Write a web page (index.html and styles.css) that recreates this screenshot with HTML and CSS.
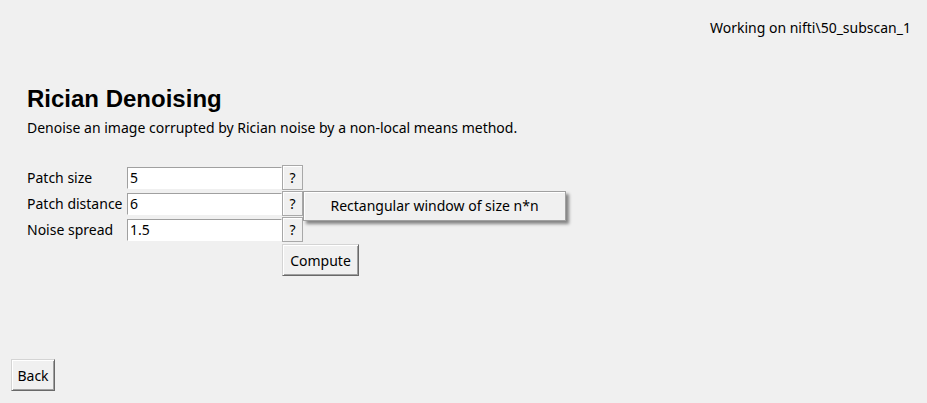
FILE: index.html
```html
<!DOCTYPE html>
<html>
<head>
<meta charset="utf-8">
<link rel="stylesheet" href="styles.css">
</head>
<body>
<div class="window">
  <div class="status">Working on nifti\50_subscan_1</div>
  <div class="content">
    <h1 class="title">Rician Denoising</h1>
    <p class="desc">Denoise an image corrupted by Rician noise by a non-local means method.</p>
    <div class="form">
      <label class="lbl">Patch size</label>
      <div class="entry">5</div>
      <button class="help">?</button>

      <label class="lbl">Patch distance</label>
      <div class="entry">6</div>
      <div class="help-wrap">
        <button class="help">?</button>
        <div class="tooltip">Rectangular window of size n*n</div>
      </div>

      <label class="lbl">Noise spread</label>
      <div class="entry">1.5</div>
      <button class="help">?</button>

      <div></div>
      <div></div>
      <button class="btn compute">Compute</button>
    </div>
  </div>
  <div class="footer">
    <button class="btn back">Back</button>
  </div>
</div>
</body>
</html>
```
FILE: styles.css
```css
html, body {
  margin: 0;
  padding: 0;
  background: #f0f0f0;
}
body {
  font-family: "Noto Sans", "Open Sans", sans-serif;
  font-size: 14px;
  color: #000;
}
.window {
  width: 927px;
  height: 403px;
  display: flex;
  flex-direction: column;
  box-sizing: border-box;
}
.status {
  align-self: flex-end;
  margin: 18px 16px 0 0;
  line-height: 20px;
}
.content {
  padding-left: 27px;
  flex: 1;
}
.title {
  font-family: "Liberation Sans", Arial, sans-serif;
  font-weight: bold;
  font-size: 24px;
  margin: 47px 0 0 0;
  line-height: 28px;
}
.desc {
  margin: 5px 0 0 0;
  line-height: 20px;
}
.form {
  margin-top: 27px;
  display: grid;
  grid-template-columns: 100px 155px 21px;
  grid-auto-rows: 26px;
  align-items: start;
}
.lbl {
  line-height: 20px;
  margin-top: 3px;
  white-space: nowrap;
}
.entry {
  height: 22px;
  margin-top: 2px;
  box-sizing: border-box;
  background: #fff;
  border-top: 1px solid #a0a0a0;
  border-left: 1px solid #a0a0a0;
  border-right: 1px solid #ffffff;
  border-bottom: 1px solid #ffffff;
  padding-left: 2px;
  line-height: 20px;
}
.help-wrap {
  position: relative;
}
.help {
  display: block;
  width: 21px;
  height: 25px;
  box-sizing: border-box;
  margin: 0;
  padding: 0;
  font: inherit;
  background: #f0f0f0;
  border: 1px solid #a8a8a8;
  box-shadow: inset 1px 1px 0 #fff;
  color: #000;
  line-height: 20px;
}
.tooltip {
  position: absolute;
  left: 21px;
  top: 0;
  width: 263px;
  height: 30px;
  box-sizing: border-box;
  background: #f0f0f0;
  border: 1px solid #a0a0a0;
  box-shadow: 3px 3px 3px rgba(0,0,0,0.45), inset 1px 1px 0 #fff;
  text-align: center;
  line-height: 28px;
  white-space: nowrap;
}
.btn {
  margin: 0;
  padding: 0 4px;
  font: inherit;
  color: #000;
  background: #f0f0f0;
  border: 1px solid #d4d4d4;
  border-right-color: #696969;
  border-bottom-color: #696969;
  box-shadow: inset 1px 1px 0 #fff, inset -1px -1px 0 #a0a0a0;
  height: 32px;
  box-sizing: border-box;
  white-space: nowrap;
}
.compute {
  justify-self: start;
  width: 77px;
  margin-top: 1px;
}
.footer {
  padding: 0 0 12px 11px;
}
.back {
  width: 44px;
}
```
